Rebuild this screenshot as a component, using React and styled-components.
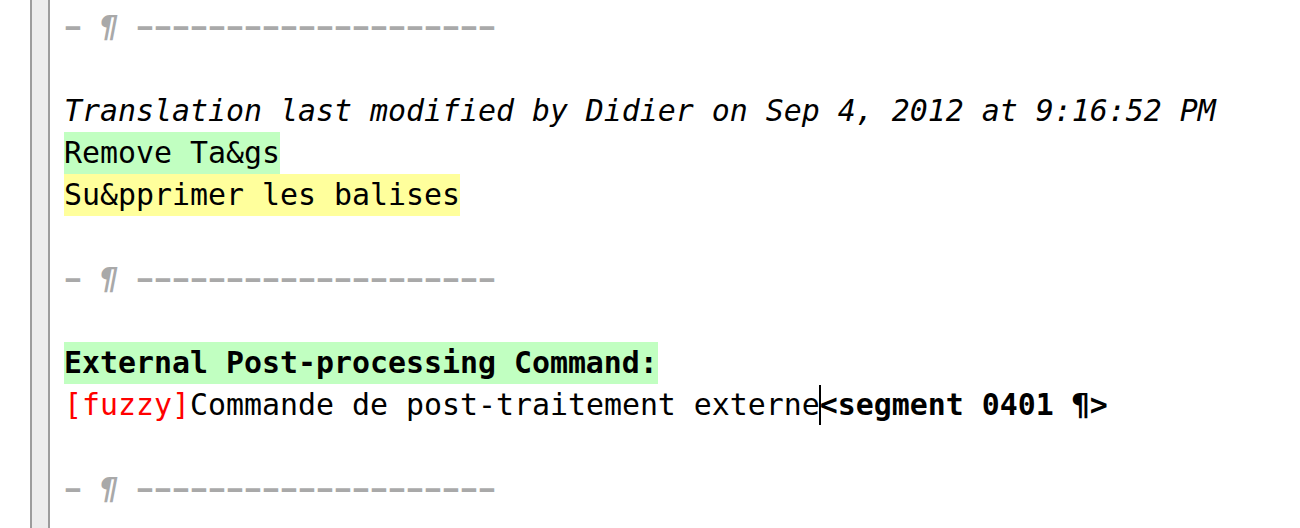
import React from 'react'
import styled, { createGlobalStyle } from 'styled-components'

const GlobalStyle = createGlobalStyle`
  html, body {
    margin: 0;
    padding: 0;
    background: #ffffff;
    overflow: hidden;
  }
`

const colors = {
  gutter: '#ececec',
  gutterBorder: '#9c9c9c',
  marker: '#a9a9a9',
  source: '#c1ffc1',
  target: '#ffff9c',
  fuzzy: '#ff0000',
}

const Editor = styled.div`
  display: flex;
  height: 528px;
  width: 1300px;
  padding-left: 30px;
  box-sizing: border-box;
  font-family: "DejaVu Sans Mono", "Liberation Mono", monospace;
  font-size: 29.9px;
  line-height: 42px;
  color: #000;
`

const Gutter = styled.div`
  width: 16px;
  flex: none;
  background: ${colors.gutter};
  border-left: 2px solid ${colors.gutterBorder};
  border-right: 2px solid ${colors.gutterBorder};
`

const Text = styled.div`
  padding: 6px 0 0 14px;
  white-space: pre;
`

const Line = styled.div`
  height: 42px;
  font-style: ${props => (props.italic ? 'italic' : 'normal')};
`

const Marker = styled.span`
  color: ${colors.marker};
  font-weight: bold;
`

const Dash = styled.span`
  display: inline-block;
  transform: scaleX(0.8);
`

const Pilcrow = styled.span`
  font-style: italic;
`

const Mark = styled.span`
  display: inline-block;
  background: ${props => (props.kind === 'target' ? colors.target : colors.source)};
  font-weight: ${props => (props.bold ? 'bold' : 'normal')};
`

const Fuzzy = styled.span`
  color: ${colors.fuzzy};
`

const Caret = styled.span`
  display: inline-block;
  width: 0;
  height: 40px;
  vertical-align: top;
  margin-top: 1px;
  border-left: 2px solid #000;
  margin-left: -1px;
  margin-right: -1px;
`

const SegmentTag = styled.span`
  font-weight: bold;
`

const Separator = () => (
  <Line>
    <Marker>
      <Dash>–</Dash>
      {' '}
      <Pilcrow>¶</Pilcrow>
      {' '}
      {Array.from({ length: 20 }, (_, i) => (
        <Dash key={i}>–</Dash>
      ))}
    </Marker>
  </Line>
)

export default function App() {
  return (
    <>
      <GlobalStyle />
      <Editor>
        <Gutter />
        <Text>
          <Separator />
          <Line />
          <Line italic>Translation last modified by Didier on Sep 4, 2012 at 9:16:52 PM</Line>
          <Line>
            <Mark kind="source">Remove Ta&amp;gs</Mark>
          </Line>
          <Line>
            <Mark kind="target">Su&amp;pprimer les balises</Mark>
          </Line>
          <Line />
          <Separator />
          <Line />
          <Line>
            <Mark kind="source" bold>External Post-processing Command:</Mark>
          </Line>
          <Line>
            <Fuzzy>[fuzzy]</Fuzzy>Commande de post-traitement externe<Caret />
            <SegmentTag>{'<segment 0401 ¶>'}</SegmentTag>
          </Line>
          <Line />
          <Separator />
        </Text>
      </Editor>
    </>
  )
}
